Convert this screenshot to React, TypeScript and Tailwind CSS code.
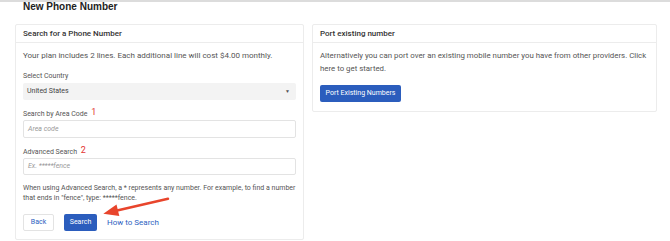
import React from "react";

export default function App() {
  return (
    <div className="relative w-[670px] h-[241px] overflow-hidden bg-white border-t-2 border-[#dcdcdc] font-['Roboto',sans-serif]">
      <h1 className="ml-[23px] -mt-[1px] text-[10px] leading-[11px] font-bold text-[#222] font-['Liberation_Sans',Arial,sans-serif]">
        New Phone Number
      </h1>
      <div className="flex items-start gap-[8px] ml-[15px] mt-[12px]">
        {/* Left card */}
        <div className="w-[289px] border border-[#ececec] rounded-[2px] bg-white">
          <div className="h-[18px] border-b border-[#ececec] flex items-center px-[7px] text-[8px] font-medium text-[#333]">
            Search for a Phone Number
          </div>
          <div className="px-[7px] pt-[7px] pb-[8px]">
            <p className="text-[8px] leading-[12px] text-[#555] whitespace-nowrap">
              Your plan includes 2 lines. Each additional line will cost $4.00 monthly.
            </p>
            <label className="block mt-[9px] text-[7px] leading-[10px] text-[#555]">Select Country</label>
            <div className="mt-[2px] h-[17px] bg-[#f3f3f3] rounded-[2px] flex items-center justify-between px-[4px] text-[7px] text-[#444]">
              <span>United States</span>
              <span className="text-[5px] text-[#555] mr-[2px]">▼</span>
            </div>
            <label className="block mt-[8px] text-[7px] leading-[10px] text-[#555]">
              Search by Area Code <span className="ml-[2px] text-[9px] leading-[10px] text-[#e3342f] relative -top-[1px]">1</span>
            </label>
            <div className="mt-[1px] h-[18px] border border-[#e3e3e3] rounded-[2px] flex items-center px-[4px] text-[7px] italic text-[#999]">
              Area code
            </div>
            <label className="block mt-[8px] text-[7px] leading-[10px] text-[#555]">
              Advanced Search <span className="ml-[2px] text-[9px] leading-[10px] text-[#e3342f] relative -top-[1px]">2</span>
            </label>
            <div className="mt-[1px] h-[17px] border border-[#e3e3e3] rounded-[2px] flex items-center px-[4px] text-[7px] italic text-[#999]">
              Ex. *****fence
            </div>
            <p className="mt-[8px] text-[7px] leading-[10px] text-[#555]">
              When using Advanced Search, a * represents any number. For example, to find a number
              <br />
              that ends in "fence", type: *****fence.
            </p>
            <div className="mt-[11px] flex items-center gap-[10px]">
              <button className="w-[31px] h-[17px] border border-[#e3e3e3] rounded-[2px] bg-white text-[7px] text-[#2d5fbf]">
                Back
              </button>
              <button className="w-[33px] h-[17px] rounded-[2px] bg-[#2b5dbd] text-[7px] text-white">
                Search
              </button>
              <span className="text-[8px] text-[#2d5fbf]">How to Search</span>
            </div>
          </div>
        </div>
        {/* Right card */}
        <div className="w-[345px] border border-[#ececec] rounded-[2px] bg-white">
          <div className="h-[18px] border-b border-[#ececec] flex items-center px-[7px] text-[8px] font-medium text-[#333]">
            Port existing number
          </div>
          <div className="px-[7px] pt-[5.5px] pb-[9px]">
            <p className="text-[7.85px] leading-[13px] text-[#555]">
              Alternatively you can port over an existing mobile number you have from other providers. Click
              <br />
              here to get started.
            </p>
            <button className="mt-[10.5px] w-[81px] h-[17px] rounded-[2px] bg-[#2b5dbd] text-[7px] text-white">
              Port Existing Numbers
            </button>
          </div>
        </div>
      </div>
      {/* Red annotation arrow */}
      <svg className="absolute left-0 top-0 pointer-events-none" width="670" height="241" viewBox="0 0 670 241">
        <line x1="168" y1="196.7" x2="116" y2="208.7" stroke="#e8452c" strokeWidth="2.5" strokeLinecap="round" />
        <polygon points="103.3,211.7 116.5,202.5 119.3,214.1" fill="#e8452c" />
      </svg>
    </div>
  );
}
